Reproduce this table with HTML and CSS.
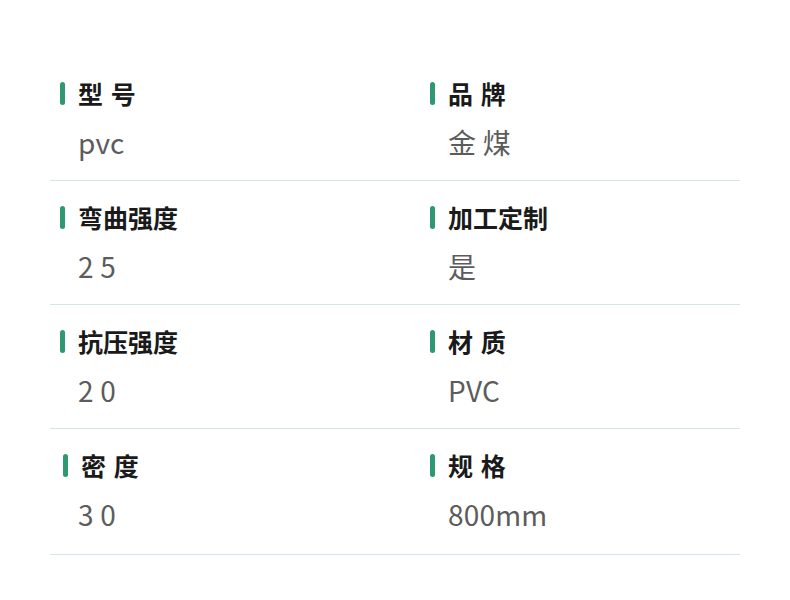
FILE: index.html
```html
<!DOCTYPE html>
<html lang="zh">
<head>
<meta charset="utf-8">
<link rel="stylesheet" href="styles.css">
</head>
<body>
<div class="specs">
  <div class="row">
    <div class="cell"><div class="label">型 号</div><div class="value">pvc</div></div>
    <div class="cell"><div class="label">品 牌</div><div class="value">金 煤</div></div>
  </div>
  <div class="row">
    <div class="cell"><div class="label">弯曲强度</div><div class="value">2 5</div></div>
    <div class="cell"><div class="label">加工定制</div><div class="value">是</div></div>
  </div>
  <div class="row">
    <div class="cell"><div class="label">抗压强度</div><div class="value">2 0</div></div>
    <div class="cell"><div class="label">材 质</div><div class="value">PVC</div></div>
  </div>
  <div class="row last">
    <div class="cell shifted"><div class="label">密 度</div><div class="value">3 0</div></div>
    <div class="cell"><div class="label">规 格</div><div class="value">800mm</div></div>
  </div>
</div>
</body>
</html>
```

FILE: styles.css
```css
html, body {
  margin: 0;
  padding: 0;
  background: #ffffff;
}
body {
  font-family: "Noto Sans CJK SC", "Noto Sans", sans-serif;
}
.specs {
  width: 690px;
  margin: 57px 0 0 50px;
}
.row {
  display: grid;
  grid-template-columns: 370px 320px;
  height: 123px;
  border-bottom: 1px solid #d2e8e6;
}
.row.last {
  height: 125px;
}
.cell {
  padding: 19px 0 0 10px;
}
.label {
  display: flex;
  align-items: center;
  height: 34px;
  font-size: 25px;
  font-weight: 700;
  color: #1a1a1a;
  word-spacing: 2px;
}
.label::before {
  content: "";
  width: 5px;
  height: 23px;
  border-radius: 2.5px;
  background: #2f9870;
  margin-right: 13px;
}
.shifted .label {
  padding-left: 3px;
}
.value {
  margin-top: 14px;
  padding-left: 18px;
  height: 36px;
  line-height: 36px;
  font-size: 28px;
  font-weight: 400;
  letter-spacing: 0.2px;
  color: #5c5c5c;
}
```
